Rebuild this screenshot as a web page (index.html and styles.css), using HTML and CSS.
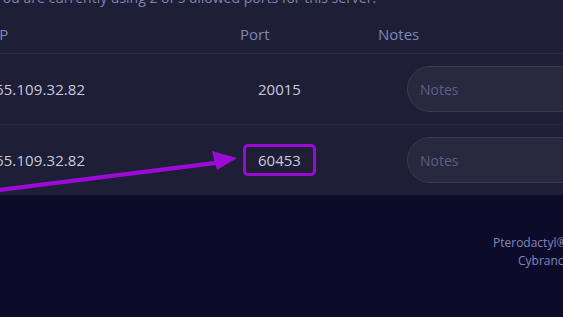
FILE: index.html
```html
<!DOCTYPE html>
<html lang="en">
<head>
<meta charset="utf-8">
<title>Network</title>
<link rel="stylesheet" href="styles.css">
</head>
<body>
<div class="page">
  <section class="card">
    <p class="notice">You are currently using 2 of 5 allowed ports for this server.</p>
    <div class="table">
      <div class="row head">
        <div class="cell">IP</div>
        <div class="cell">Port</div>
        <div class="cell">Notes</div>
      </div>
      <div class="row">
        <div class="cell value">65.109.32.82</div>
        <div class="cell"><span class="port">20015</span></div>
        <div class="cell"><input class="notes" type="text" placeholder="Notes"></div>
      </div>
      <div class="row last">
        <div class="cell value">65.109.32.82</div>
        <div class="cell"><span class="port marked">60453</span></div>
        <div class="cell"><input class="notes" type="text" placeholder="Notes"></div>
      </div>
    </div>
  </section>
  <footer class="footer">
    <p class="line one">Pterodactyl® © 2015 - 2024</p>
    <p class="line two">Cybrancee Hosting</p>
  </footer>
</div>
<svg class="arrow" width="563" height="317" viewBox="0 0 563 317" aria-hidden="true">
  <line x1="-4" y1="190.3" x2="216" y2="162.8" stroke="#9a0cd6" stroke-width="4.2" stroke-linecap="butt"/>
  <polygon points="212,151 237,158 217,170 214.5,161.5" fill="#9a0cd6"/>
</svg>
</body>
</html>
```

FILE: styles.css
```css
html, body {
  margin: 0;
  padding: 0;
}

body {
  width: 563px;
  height: 317px;
  overflow: hidden;
  background: #0c0c2a;
  font-family: "Open Sans", "Noto Sans", sans-serif;
  position: relative;
}

.page {
  margin-left: -5px;
  width: 720px;
}

.card {
  background: #1e1e37;
  margin-top: -12px;
}

.notice {
  margin: 0;
  font-size: 14px;
  line-height: 20px;
  color: #7e84ad;
  white-space: nowrap;
}

.table {
  display: flex;
  flex-direction: column;
}

.row {
  display: grid;
  grid-template-columns: 245px 138px 1fr;
  align-items: center;
  height: 70px;
  border-bottom: 1px solid #2b2b45;
  font-size: 15px;
  color: #c9cadf;
}

.row.last {
  border-bottom: none;
}

.row.head {
  height: 46px;
  box-sizing: border-box;
  padding-top: 15px;
  padding-bottom: 8px;
  line-height: 22px;
  color: #7f87b8;
  align-items: start;
}

.cell {
  white-space: nowrap;
}

.value {
  letter-spacing: 0.1px;
}

.port {
  display: inline-block;
  margin-left: 3px;
  padding: 0 12px;
  line-height: 26px;
  border: 3px solid transparent;
  border-radius: 5px;
}

.port.marked {
  border-color: #9a0cd6;
}

.notes {
  display: block;
  margin-left: 29px;
  width: 320px;
  height: 46px;
  box-sizing: border-box;
  padding: 0 12px;
  border: 1px solid #393952;
  border-radius: 23px;
  background: #28283f;
  font-family: "Open Sans", "Noto Sans", sans-serif;
  font-size: 14px;
  color: #c9cadf;
  outline: none;
}

.notes::placeholder {
  color: #5b5f86;
}

.footer {
  padding-top: 39px;
  font-size: 12px;
  line-height: 17.5px;
  color: #8087bf;
}

.line {
  margin: 0;
  white-space: nowrap;
}

.line.one {
  margin-left: 498px;
}

.line.two {
  margin-left: 523px;
}

.arrow {
  position: absolute;
  top: 0;
  left: 0;
}
```
